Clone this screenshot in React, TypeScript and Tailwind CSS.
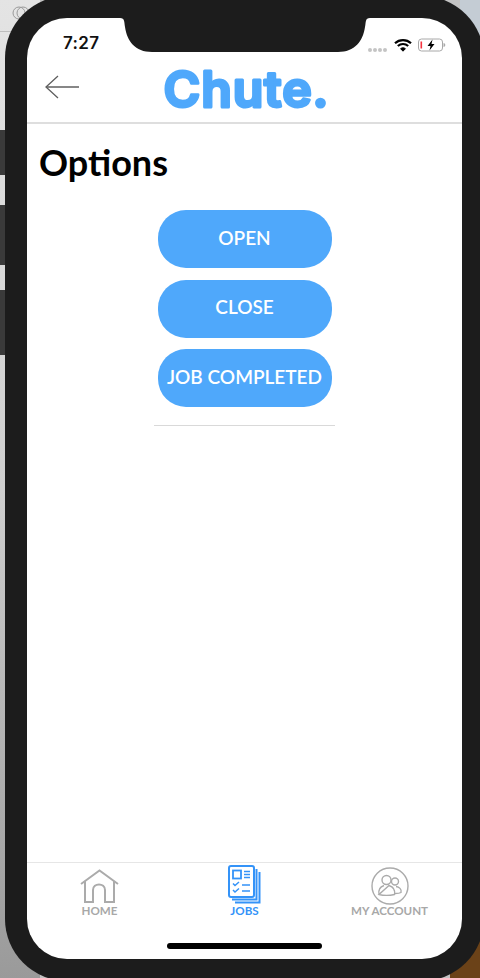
import React from 'react'

function BackArrow() {
    return (
        <svg width="36" height="24" viewBox="0 0 36 24" fill="none" stroke="#5f5f5f" strokeWidth="1.3">
            <path d="M35 12H2" />
            <path d="M14 1L2 12L14 23" />
        </svg>
    )
}

function Logo() {
    return (
        <svg className="-mt-[4px]" width="170" height="66" viewBox="0 0 170 66">
            <text
                x="3.5"
                y="50.5"
                textLength="165"
                lengthAdjust="spacing"
                fontFamily="Inter, sans-serif"
                fontWeight="600"
                fontSize="50"
                fill="#4fa8fb"
                stroke="#4fa8fb"
                strokeWidth="3"
                strokeLinejoin="round"
            >
                Chute.
            </text>
        </svg>
    )
}

function Wifi() {
    return (
        <svg width="18" height="14" viewBox="0 0 18 14" fill="none" stroke="#000">
            <path d="M1 5.2C5.5 1 12.5 1 17 5.2" strokeWidth="2.2" />
            <path d="M3.8 8C6.8 5.3 11.2 5.3 14.2 8" strokeWidth="2.2" />
            <path d="M6.6 10.7C8 9.5 10 9.5 11.4 10.7L9 13.2Z" fill="#000" strokeWidth="1" />
        </svg>
    )
}

function Battery() {
    return (
        <svg width="28" height="14" viewBox="0 0 28 14" fill="none">
            <rect x="0.5" y="1" width="24" height="12" rx="3" stroke="#a8a8a8" />
            <rect x="2.5" y="3.5" width="1.6" height="7" fill="#f5333f" />
            <path d="M14.5 1.5L9.5 8H12.5L11.5 12.5L16.5 6H13.5Z" fill="#000" />
            <path d="M26 5.5C27 6 27 8 26 8.500Z" fill="#a8a8a8" stroke="#a8a8a8" />
        </svg>
    )
}

function Notch() {
    return (
        <svg className="absolute top-0 left-[93px]" width="250" height="35" viewBox="0 0 250 35">
            <path d="M0 0H250C245 0 246 4 245 9C243 23 235 34 218 34H32C15 34 7 23 5 9C4 4 5 0 0 0Z" fill="#1c1c1c" />
        </svg>
    )
}

function HomeIcon() {
    return (
        <svg width="40" height="36" viewBox="0 0 40 36" fill="none" stroke="#ababab" strokeWidth="2">
            <path d="M1 15L19.500 1.500L38 15" />
            <path d="M5 12V33H13V21C13 13.500 25 13.500 25 21V33H34V12" />
        </svg>
    )
}

function JobsIcon() {
    return (
        <svg width="34" height="40" viewBox="1 0 34 40" fill="none" stroke="#3493f8" strokeWidth="2">
            <rect x="2" y="1" width="25" height="31" rx="2" />
            <path d="M29.500 4V34.500H5" />
            <path d="M32.500 7V37.500H8" />
            <rect x="6" y="5.500" width="8" height="8" strokeWidth="1.800" />
            <path d="M17 6.500H23M17 9.500H23M17 12.500H23" strokeWidth="1.500" />
            <path d="M6 18.500L8 20.500L12 17M6 25L8 27L12 23.500" strokeWidth="1.500" />
            <path d="M15 20H23M15 26H23" strokeWidth="1.500" />
        </svg>
    )
}

function AccountIcon() {
    return (
        <svg width="38" height="38" viewBox="0 0 38 38" fill="none" stroke="#ababab">
            <circle cx="19" cy="19" r="18" strokeWidth="1.400" />
            <circle cx="15.500" cy="13" r="4.500" strokeWidth="1.400" />
            <path d="M8 27.500C7 22 10 19.500 13 18.500M18 18.500C21 19.500 24.500 22 23.500 27.500C19 28.500 12 28.500 8 27.500Z" strokeWidth="1.400" />
            <circle cx="24" cy="14.500" r="3.500" strokeWidth="1.400" />
            <path d="M25 19.500C28 20 31 22 30 25.500C28.500 26.500 26.500 26.500 24 26.500" strokeWidth="1.400" />
        </svg>
    )
}

function OptionButton({ label }: { label: string }) {
    return (
        <button className="w-[174px] h-[58px] pb-[2px] rounded-[28px] bg-[#4fa8fb] text-white text-[19px] font-semibold whitespace-nowrap flex items-center justify-center">
            {label}
        </button>
    )
}

export default function App() {
    return (
        <div className="relative w-[480px] h-[978px] overflow-hidden bg-[#c2c2c2] font-['Lato',sans-serif]">
            {/* desktop showing behind the phone */}
            <div className="absolute left-0 top-0 w-[40px] h-[978px] flex flex-col bg-gradient-to-b from-[#e4e4e4] via-[#cfcfcf] to-[#9a9a9a]">
                <div className="h-[32px] border-b border-[#bdbdbd]" />
                <div className="h-[98px]" />
                <div className="h-[45px] bg-[#3a3a3a]" />
                <div className="h-[30px]" />
                <div className="h-[60px] bg-[#3a3a3a]" />
                <div className="h-[25px]" />
                <div className="h-[65px] bg-[#3a3a3a]" />
            </div>
            <svg className="absolute left-[12px] top-[5px]" width="20" height="16" viewBox="0 0 20 16" fill="none" stroke="#9a9a9a">
                <circle cx="7" cy="8" r="6" />
                <circle cx="11" cy="8" r="6" />
            </svg>
            <div className="absolute right-0 top-0 w-[20px] h-[50px] bg-[#c4ccd4]" />
            <div className="absolute right-0 bottom-0 w-[30px] h-[45px] bg-[#6b4218]" />

            <div className="relative ml-[5px] -mt-[4px] w-[479px] h-[985px] rounded-[62px] bg-[#1c1c1c] pt-[22px] pl-[22px]">
                <div className="relative w-[435px] h-[941px] rounded-[40px] bg-white overflow-hidden flex flex-col">
                    <div className="h-[42px] pl-[36px] pr-[16px] flex justify-between items-end shrink-0">
                        <span className="text-[17px] leading-[20px] mb-[7px] font-semibold text-[#111] tracking-[0.3px] font-['Inter',sans-serif]">7:27</span>
                        <div className="flex items-center gap-[6px] mb-[8px]">
                            <div className="flex gap-[1px] mt-[9px] mr-[1px]">
                                <span className="w-[4px] h-[4px] rounded-full bg-[#c4c4c4]" />
                                <span className="w-[4px] h-[4px] rounded-full bg-[#c4c4c4]" />
                                <span className="w-[4px] h-[4px] rounded-full bg-[#c4c4c4]" />
                                <span className="w-[4px] h-[4px] rounded-full bg-[#c4c4c4]" />
                            </div>
                            <Wifi />
                            <Battery />
                        </div>
                    </div>

                    <div className="h-[64px] shrink-0 grid grid-cols-[1fr_auto_1fr] items-center border-b-2 border-[#dedede]">
                        <div className="pl-[17px] pb-[8px]">
                            <BackArrow />
                        </div>
                        <Logo />
                        <div />
                    </div>

                    <Notch />

                    <div className="flex-1 flex flex-col">
                        <h1 className="pl-[12px] pt-[17px] text-[36px] leading-[42px] font-bold text-black">Options</h1>
                        <div className="mt-[27px] flex flex-col items-center gap-[11.5px]">
                            <OptionButton label="OPEN" />
                            <OptionButton label="CLOSE" />
                            <OptionButton label="JOB COMPLETED" />
                        </div>
                        <div className="mt-[18px] mx-auto w-[181px] h-px bg-[#d9d9d9]" />
                    </div>

                    <div className="h-[97px] shrink-0 border-t border-[#e6e6e6] flex flex-col">
                        <div className="grid grid-cols-3 h-[52px] pt-[2px]">
                            <div className="flex flex-col items-center justify-end">
                                <HomeIcon />
                                <span className="text-[11.6px] leading-[12px] font-bold text-[#a8a8a8]">HOME</span>
                            </div>
                            <div className="flex flex-col items-center justify-end">
                                <JobsIcon />
                                <span className="text-[11.6px] leading-[12px] font-bold text-[#3493f8]">JOBS</span>
                            </div>
                            <div className="flex flex-col items-center justify-end">
                                <AccountIcon />
                                <span className="text-[11.6px] leading-[12px] font-bold text-[#a8a8a8]">MY ACCOUNT</span>
                            </div>
                        </div>
                        <div className="mt-[28px] mx-auto w-[155px] h-[6px] rounded-full bg-black" />
                    </div>
                </div>
            </div>
        </div>
    )
}
